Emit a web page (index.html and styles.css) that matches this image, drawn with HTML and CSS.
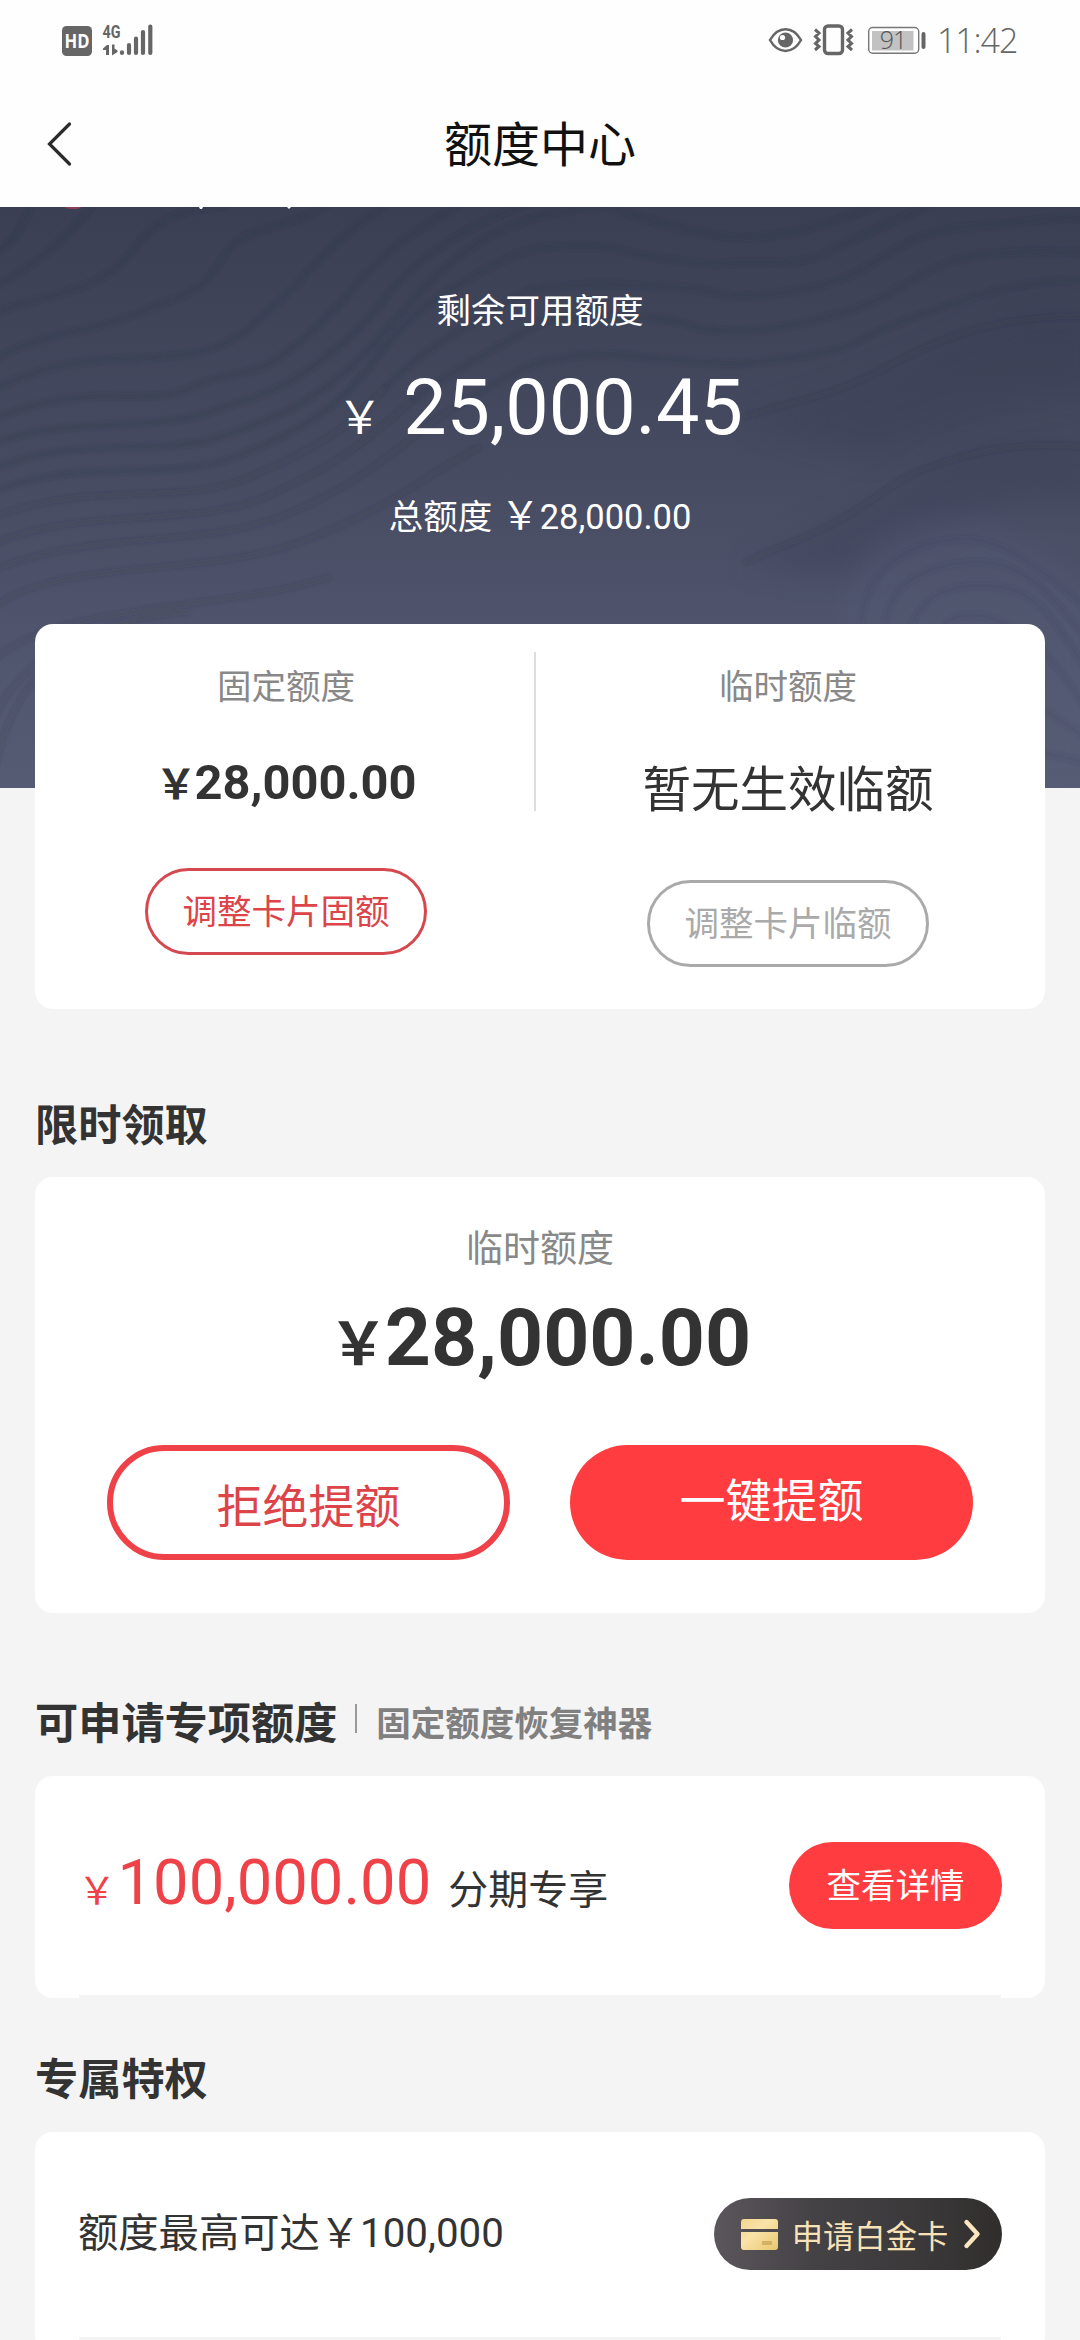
FILE: index.html
```html
<!DOCTYPE html>
<html lang="zh-CN">
<head>
<meta charset="utf-8">
<title>额度中心</title>
<link rel="stylesheet" href="styles.css">
</head>
<body>
<header class="top">
  <div class="status">
    <svg class="status-left" width="100" height="40" viewBox="60 20 100 40">
      <rect x="62" y="26" width="30" height="30" rx="4.5" fill="#666"/>
      <text x="77" y="47.5" class="hd" textLength="25" lengthAdjust="spacingAndGlyphs">HD</text>
      <text x="102.5" y="38.3" class="net" textLength="18" lengthAdjust="spacingAndGlyphs">4G</text>
      <path d="M109 45V55H106V50H103V48.5L107 45ZM112 44.5H114.500V48.500L117.500 50.500V52L112 55.500Z" fill="#666"/>
      <g stroke="#666" stroke-width="4.2" stroke-linecap="round"><path d="M122 52.300V53M129 45V53M136 38.500V53M143 32V53M150.300 26.500V53"/></g>
    </svg>
    <div class="status-right">
      <svg width="160" height="40" viewBox="768 20 160 40" fill="none" stroke="#666">
        <path d="M770 40C778 25.500 793 25.500 801 40C793 54.500 778 54.500 770 40Z" stroke-width="2.500"/>
        <circle cx="785.500" cy="40" r="7.600" fill="#666" stroke="none"/>
        <circle cx="782.500" cy="37.500" r="2.600" fill="#fff" stroke="none"/>
        <rect x="824.500" y="26" width="18" height="27.500" rx="3.500" stroke-width="3.400"/>
        <path d="M815 29.500L819 33L815.500 36.500L819 40L815.500 43.500L819 46.500L815 50M852 29.500L848 33L851.500 36.500L848 40L851.500 43.500L848 46.500L852 50" stroke-width="3"/>
        <rect x="868.700" y="27.500" width="50" height="25.800" rx="4" stroke="#777" stroke-width="1.400"/>
        <rect x="872" y="31" width="41.500" height="19.500" fill="#c2c2c2" stroke="none"/>
        <rect x="921.500" y="32" width="4" height="17" rx="2" fill="#666" stroke="none"/>
        <text x="893" y="49" class="battery">91</text>
      </svg>
      <span class="clock">11:42</span>
    </div>
  </div>
  <nav class="nav">
    <svg class="back" width="30" height="50" viewBox="0 0 30 50"><path d="M24.500 5L4.500 25L24.500 45" fill="none" stroke="#2b2b2b" stroke-width="3.200" stroke-linecap="round"/></svg>
    <h1>额度中心</h1>
  </nav>
</header>

<section class="hero">
  <svg class="waves" width="1080" height="581" viewBox="0 0 1080 581" fill="none">
    <defs>
      <filter id="soft" x="-5%" y="-5%" width="110%" height="110%"><feGaussianBlur stdDeviation="2"/></filter>
      <filter id="wide" x="-20%" y="-20%" width="140%" height="140%"><feGaussianBlur stdDeviation="14"/></filter>
    </defs>
    <path d="M744 215C800 195 861 180 964 130S1060 112 1100 112V190C990 190 940 240 870 250Z" fill="#34394f" opacity=".25" filter="url(#wide)"/>
    <path d="M744 360C800 330 840 313 930 260S1040 236 1100 242V300C1000 270 940 330 850 370Z" fill="#383d55" opacity=".35" filter="url(#wide)"/>
    <path d="M842 430C842 350 880 310 940 310S1060 350 1100 400V590H842Z" fill="#5c627d" opacity=".22" filter="url(#wide)"/>
    <g stroke="#2c3147" stroke-opacity=".34" stroke-width="4" filter="url(#soft)">
      <path d="M-5 46C12 36 24 20 32 -4"/>
      <path d="M-5 79C35 58 70 30 93 -4"/>
      <path d="M-5 106C40 88 88 85 117 60S145 5 228 -2"/>
      <path d="M-5 152C40 125 95 125 138 106S200 90 222 52S290 25 330 -4"/>
      <path d="M-5 182C30 165 65 155 103 153S180 150 200 145S240 130 255 116S285 90 303 70S345 25 385 -2"/>
      <path d="M-5 212C30 198 50 193 83 190S165 195 193 180S250 170 275 153S330 110 358 76S420 20 460 -2"/>
      <path d="M-5 236C60 210 150 225 207 206S275 185 303 166S360 125 386 90S460 20 530 -4"/>
      <path d="M-5 262C70 228 160 250 220 230S310 195 345 165S400 105 430 75S500 15 560 5S610 -2 620 3S665 18 689 23S735 32 758 30S830 20 880 -4"/>
      <path d="M-5 284C80 250 170 275 235 250S340 200 372 156S430 95 455 80S520 40 551 40S600 38 620 43S690 58 723 56S800 60 826 46S880 20 935 -4"/>
      <path d="M386 180C420 145 450 130 482 110S530 78 565 78S660 76 689 81S730 90 758 88S830 80 861 63S920 22 964 20S1050 8 1085 12"/>
      <path d="M413 193C450 165 480 150 510 133S545 110 572 110S660 108 689 118S765 124 792 118S860 105 895 83S960 48 999 46S1050 44 1085 46"/>
      <path d="M455 200C490 180 520 158 551 153S590 146 620 148S725 160 758 155S835 148 861 133S930 105 964 93S1040 72 1085 73"/>
    </g>
    <g stroke="#2c3147" stroke-opacity=".16" stroke-width="5" filter="url(#soft)">
      <path d="M-5 310C90 272 180 300 250 270S350 220 386 180"/>
      <path d="M-5 336C90 298 190 322 265 290S370 230 413 193"/>
      <path d="M-5 362C100 322 200 342 285 308S400 235 455 200"/>
      <path d="M-5 400C60 350 200 372 300 335S420 270 480 240"/>
      <path d="M-5 452C60 395 220 405 330 370"/>
      <path d="M-5 510C20 450 100 410 190 405"/>
      <path d="M-5 560C10 490 50 440 110 420"/>
      <path d="M744 210C790 195 825 190 861 173S925 138 964 126S1040 108 1085 110"/>
      <path d="M744 356C790 335 810 330 840 313S900 270 930 260S1010 232 1085 240"/>
    </g>
    <g stroke="#383d55" stroke-opacity=".2" stroke-width="4" filter="url(#soft)">
      <path d="M861 417C865 360 910 335 960 332S1060 380 1085 400"/>
      <path d="M885 417C890 375 930 355 980 355S1060 400 1085 430"/>
      <path d="M912 417C925 385 955 375 1000 380S1070 440 1085 460M945 417C970 395 1030 410 1085 500M1040 500L1085 530M1040 545L1085 555"/>
    </g>
    <ellipse cx="73" cy="0" rx="8" ry="2" fill="#8c3d58"/>
    <path d="M199 0H203L202 2H200ZM287 0H291L289 2Z" fill="#fff"/>
  </svg>
  <div class="hero-body">
    <p class="hero-label">剩余可用额度</p>
    <p class="hero-amount"><span class="yen">￥</span>25,000.45</p>
    <p class="hero-total">总额度 <span class="yen">￥</span>28,000.00</p>
  </div>
</section>

<main>
  <section class="card limits">
    <div class="limit">
      <p class="label">固定额度</p>
      <p class="limit-amount"><span class="yen">￥</span>28,000.00</p>
      <button class="pill outline">调整卡片固额</button>
    </div>
    <div class="limit temp">
      <p class="label">临时额度</p>
      <p class="limit-none">暂无生效临额</p>
      <button class="pill muted">调整卡片临额</button>
    </div>
  </section>

  <h2 class="title first">限时领取</h2>
  <section class="card offer">
    <p class="offer-label">临时额度</p>
    <p class="offer-amount"><span class="yen">￥</span>28,000.00</p>
    <div class="offer-actions">
      <button class="big reject">拒绝提额</button>
      <button class="big accept">一键提额</button>
    </div>
  </section>

  <h2 class="title second">可申请专项额度<i></i><small>固定额度恢复神器</small></h2>
  <section class="card row">
    <p class="special"><span class="yen">￥</span><b>100,000.00</b><span class="note">分期专享</span></p>
    <button class="pill detail">查看详情</button>
  </section>

  <h2 class="title third">专属特权</h2>
  <section class="card row last">
    <p class="perk">额度最高可达<span class="yen">￥</span>100,000</p>
    <button class="platinum">
      <svg width="37" height="31" viewBox="0 0 37 31">
        <defs><linearGradient id="gold" x1="0" y1="0" x2="1" y2="1"><stop offset="0" stop-color="#f3d68c"/><stop offset=".4" stop-color="#fae3a9"/><stop offset="1" stop-color="#e9c770"/></linearGradient></defs>
        <path d="M3 0H34Q37 0 37 3V10H0V3Q0 0 3 0ZM0 13H37V28Q37 31 34 31H3Q0 31 0 28Z" fill="url(#gold)"/>
        <rect x="21" y="22" width="10" height="4" fill="#d3b063"/>
      </svg>
      <span>申请白金卡</span>
      <svg width="18" height="32" viewBox="0 0 18 32"><path d="M3.500 4L14.500 16L3.500 28" fill="none" stroke="#fbe6bd" stroke-width="4.400" stroke-linecap="round" stroke-linejoin="round"/></svg>
    </button>
  </section>
</main>
</body>
</html>
```
FILE: styles.css
```css
* { box-sizing: border-box; margin: 0; padding: 0; }

html { overflow: hidden; }

body {
  width: 1080px;
  height: 2340px;
  overflow: hidden;
  background: #f4f4f4;
  color: #333;
  font-family: Roboto, "Noto Sans CJK SC", sans-serif;
}

button {
  display: flex;
  align-items: center;
  justify-content: center;
  border: 0;
  background: none;
  font: inherit;
}

.yen { display: inline-block; font-family: "Noto Sans CJK SC", sans-serif; line-height: 1; text-align: left; }

.top { height: 207px; background: #fefefe; }

.status { display: flex; justify-content: space-between; height: 80px; padding: 20px 62px 0 60px; }
.status-right { display: flex; }
.hd { font: 700 20px "Open Sans", sans-serif; fill: #fff; text-anchor: middle; }
.net { font: 700 19px "Roboto", sans-serif; fill: #666; }
.battery { font: 300 25px "Open Sans", sans-serif; fill: #555; stroke: none; text-anchor: middle; letter-spacing: -1px; }
.clock { margin-left: 9px; font: 300 34px/41px "Open Sans", sans-serif; letter-spacing: -1.1px; color: #666; width: 81px; white-space: nowrap; }

.nav { display: grid; grid-template-columns: 120px 1fr 120px; align-items: center; height: 127px; padding-bottom: 1px; }
.back { margin: 1px 0 0 45px; }
.nav h1 { margin-top: 6px; font-size: 48px; font-weight: 400; line-height: 70px; text-align: center; color: #111; }

.hero {
  position: relative;
  height: 581px;
  background: linear-gradient(#3a3f54, #464b61 45%, #51576f 80%, #555b72);
  color: #fff;
  text-align: center;
}
.waves { position: absolute; left: 0; top: 0; }
.hero-body { position: relative; padding-top: 79px; }
.hero-label { font-size: 34.5px; line-height: 50px; }
.hero-amount { margin-top: 22px; font-size: 77.300px; line-height: 100px; }
.hero-amount .yen { width: 66px; font-size: 45px; }
.hero-total { margin-top: 34px; font-size: 34.5px; line-height: 50px; }
.hero-total .yen { font-size: 39px; }

main { position: relative; padding: 0 35px; }
.card { border-radius: 18px; background: #fff; }

.limits {
  display: grid;
  grid-template-columns: 502px 502px;
  height: 385px;
  margin-top: -164px;
  background: linear-gradient(#ddd, #ddd) 499px 28px / 2px 159px no-repeat #fff;
}
.limit { display: flex; flex-direction: column; align-items: center; padding-top: 38px; }
.label { font-size: 34.5px; line-height: 50px; color: #888; }
.limit-amount { margin-top: 41px; font-size: 48.800px; font-weight: 700; line-height: 60px; }
.limit-amount .yen { width: 39px; font-size: 41px; font-weight: 700; }
.limit-none { margin-top: 49px; font-size: 48.5px; line-height: 60px; }
.pill { width: 282px; height: 87px; border-radius: 44px; font-size: 34.5px; line-height: 50px; }
.outline { margin-top: 55px; border: 3px solid #d5484f; color: #dc444a; }
.muted { margin-top: 59px; border: 3px solid #aaa; color: #aaa; }

.title { font-size: 43.200px; font-weight: 700; line-height: 60px; }
.first { margin: 88px 0 20px; }
.second { display: flex; margin: 82px 0 21px; }
.third { margin: 53px 0 21px; }
.title i { width: 2px; height: 29px; margin: 9px 19px 0 18px; background: #999; }
.title small { font-size: 34.5px; color: #808080; line-height: 58px; }

.offer { height: 436px; padding: 48px 72px 0; }
.offer-label { font-size: 37px; line-height: 50px; color: #888; text-align: center; }
.offer-amount { margin-top: 13px; font-size: 80.500px; font-weight: 700; line-height: 100px; text-align: center; }
.offer-amount .yen { width: 56px; font-size: 59px; font-weight: 700; }
.offer-actions { display: flex; justify-content: space-between; margin-top: 57px; }
.big { width: 403px; height: 115px; border-radius: 58px; font-size: 46px; line-height: 60px; }
.reject { border: 6px solid #ee4248; color: #dc444a; padding-top: 8px; }
.accept { background: #ff3d40; color: #fff; padding-bottom: 4px; }

.row {
  display: flex;
  justify-content: space-between;
  align-items: flex-start;
  height: 222px;
  padding: 66px 43px 0 44px;
  background: linear-gradient(#f4f4f4, #f4f4f4) 44px 219px / 922px 3px no-repeat #fff;
}
.last { background-position: 44px 205px; }
.special { display: flex; align-items: baseline; height: 87px; margin-left: -1px; font-size: 63.300px; line-height: 80px; color: #ee4248; }
.special .yen { width: 39.5px; font-size: 38px; }
.special b { font-weight: 400; }
.note { margin-left: 17px; font-size: 40px; color: #333; }
.detail { width: 213px; background: #ff3d40; color: #fff; }

.perk { font-size: 40.300px; line-height: 72px; margin-left: -1px; }
.platinum {
  width: 288px;
  height: 72px;
  padding-left: 6px;
  border-radius: 36px;
  background: linear-gradient(90deg, #5a565b, #454246 35%, #3c393b 70%, #302e2c);
  font-size: 31.300px;
  color: #f8e2b8;
}
.platinum span { margin: 0 15px 0 14px; }
```
